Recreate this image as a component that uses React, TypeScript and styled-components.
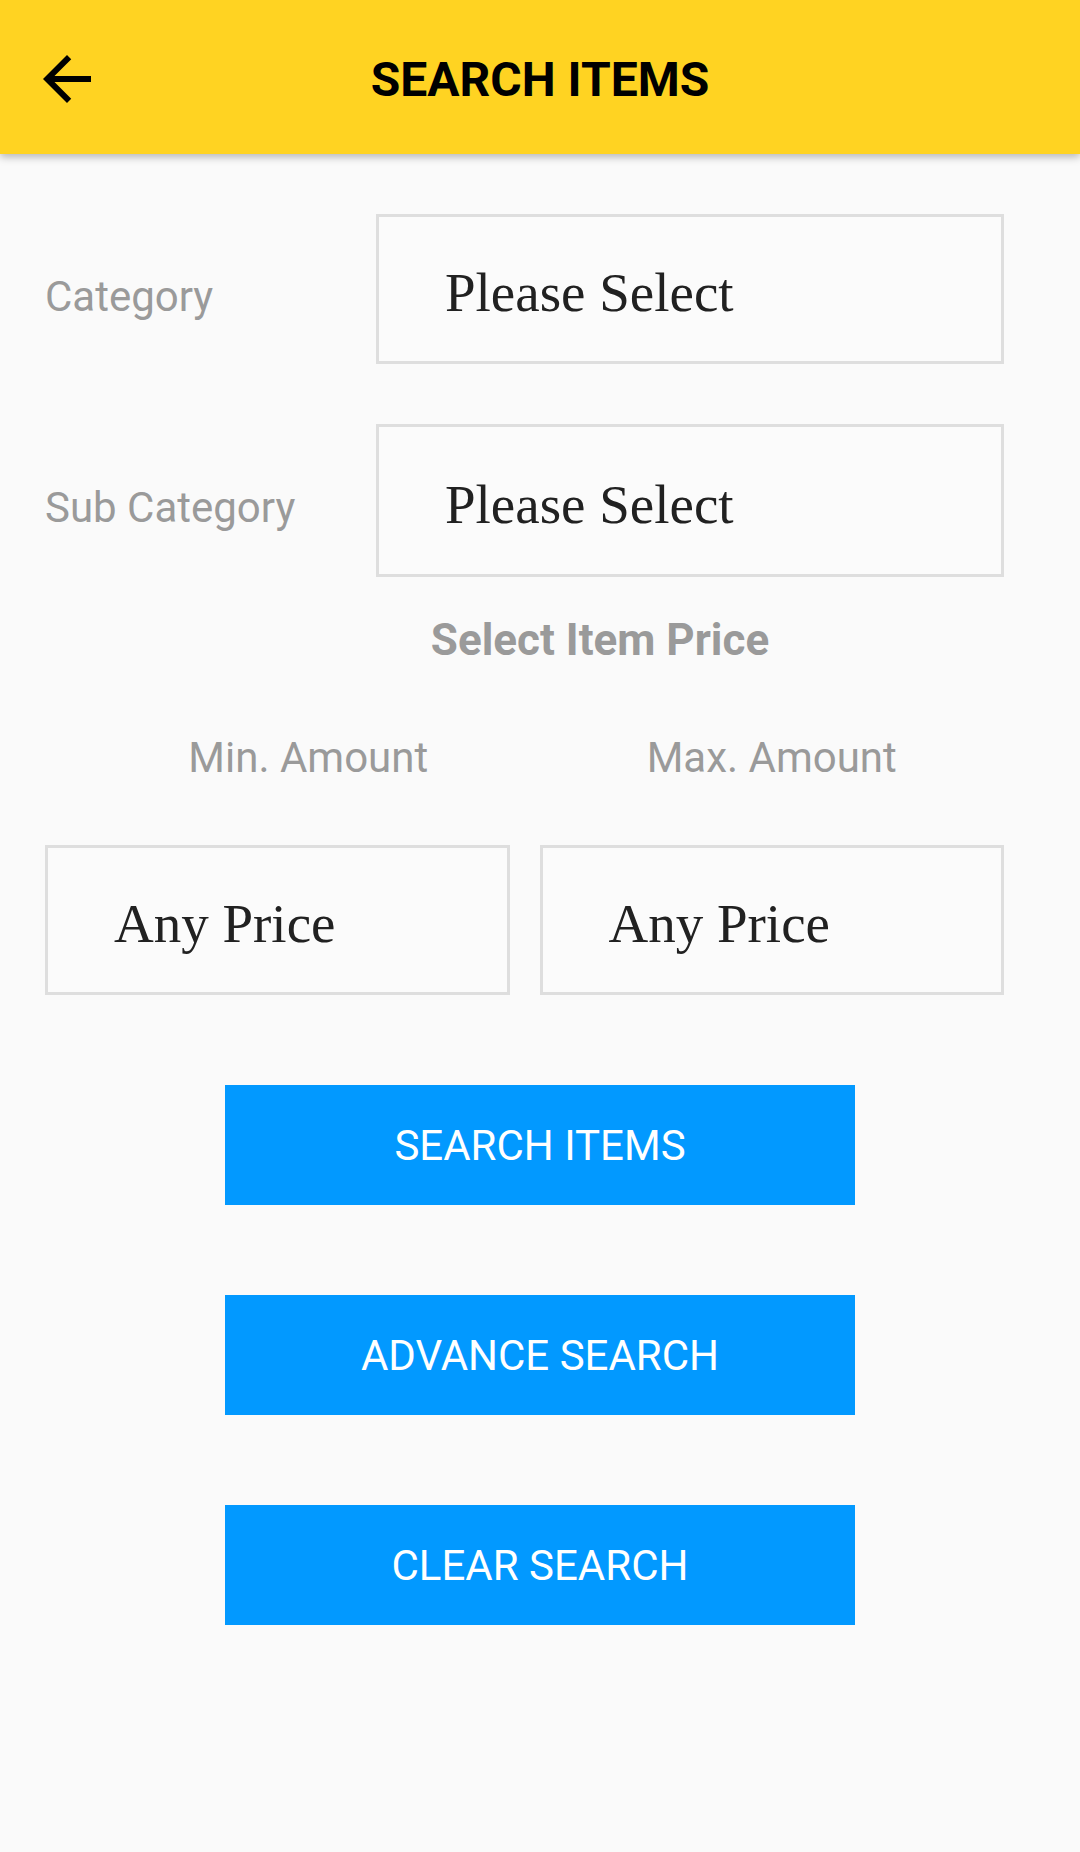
import React from 'react'
import styled, { createGlobalStyle } from 'styled-components'

const GlobalStyle = createGlobalStyle`
    html, body {
        margin: 0;
        padding: 0;
        background: #fafafa;
    }
    * {
        box-sizing: border-box;
    }
`

const priceOptions = ['Any Price', '100', '500', '1000']

const App: React.FC = () => {
    const [category, setCategory] = React.useState<string>('Please Select')
    const [subCategory, setSubCategory] = React.useState<string>('Please Select')
    const [minPrice, setMinPrice] = React.useState<string>(priceOptions[0])
    const [maxPrice, setMaxPrice] = React.useState<string>(priceOptions[0])

    const clearSearch = () => {
        setCategory('Please Select')
        setSubCategory('Please Select')
        setMinPrice(priceOptions[0])
        setMaxPrice(priceOptions[0])
    }

    return (
        <React.Fragment>
            <GlobalStyle />
            <Page>
                <Header>
                    <BackButton aria-label="back">
                        <svg width="72" height="72" viewBox="0 0 24 24">
                            <path
                                fill="#000"
                                d="M20 11H7.83l5.59-5.59L12 4l-8 8 8 8 1.41-1.41L7.83 13H20v-2z"
                            />
                        </svg>
                    </BackButton>
                    <Title>SEARCH ITEMS</Title>
                    <span />
                </Header>

                <Content>
                    <FieldRow>
                        <Label>Category</Label>
                        <SelectBox onClick={() => setCategory(category)}>{category}</SelectBox>
                    </FieldRow>
                    <FieldRow>
                        <Label>Sub Category</Label>
                        <SelectBox tall onClick={() => setSubCategory(subCategory)}>{subCategory}</SelectBox>
                    </FieldRow>

                    <SectionTitle>Select Item Price</SectionTitle>

                    <PriceLabels>
                        <PriceLabel shift={62}>Min. Amount</PriceLabel>
                        <PriceLabel shift={0}>Max. Amount</PriceLabel>
                    </PriceLabels>

                    <PriceRow>
                        <SelectBox onClick={() => setMinPrice(minPrice)}>{minPrice}</SelectBox>
                        <SelectBox onClick={() => setMaxPrice(maxPrice)}>{maxPrice}</SelectBox>
                    </PriceRow>

                    <Buttons>
                        <ActionButton>SEARCH ITEMS</ActionButton>
                        <ActionButton>ADVANCE SEARCH</ActionButton>
                        <ActionButton onClick={clearSearch}>CLEAR SEARCH</ActionButton>
                    </Buttons>
                </Content>
            </Page>
        </React.Fragment>
    )
}

export default App

const Page = styled.div`
    min-height: 1852px;
    background: #fafafa;
    font-family: Roboto, 'Liberation Sans', sans-serif;
`

const Header = styled.div`
    height: 154px;
    padding-top: 4px;
    background: #ffd322;
    display: grid;
    grid-template-columns: 1fr auto 1fr;
    align-items: center;
    box-shadow: 0 3px 8px rgba(0, 0, 0, 0.28);
`

const BackButton = styled.div`
    display: flex;
    align-items: center;
    margin-left: 31px;
    width: 72px;
    height: 72px;
`

const Title = styled.div`
    font-size: 48px;
    font-weight: 700;
    color: #000;
`

const Content = styled.div`
    padding: 60px 76px 0 45px;
`

const FieldRow = styled.div`
    display: grid;
    grid-template-columns: 331px 1fr;
    align-items: center;
    margin-bottom: 60px;

    &:nth-of-type(2) {
        margin-bottom: 0;
    }
`

const Label = styled.div`
    font-size: 42px;
    color: #9a9a9a;
    padding-top: 14px;
`

const SelectBox = styled.div<{ tall?: boolean }>`
    height: ${(p) => (p.tall ? 153 : 150)}px;
    border: 3px solid #dedede;
    background: #fbfbfb;
    display: flex;
    align-items: center;
    padding: 7px 0 0 66px;
    font-family: 'Liberation Serif', serif;
    font-size: 55px;
    color: #212121;
    cursor: pointer;
`

const SectionTitle = styled.div`
    margin-top: 37px;
    padding-left: 151px;
    text-align: center;
    font-size: 44px;
    line-height: 52px;
    font-weight: 700;
    color: #9a9a9a;
`

const PriceLabels = styled.div`
    display: grid;
    grid-template-columns: 1fr 1fr;
    column-gap: 30px;
    margin-top: 68px;
`

const PriceLabel = styled.div<{ shift: number }>`
    text-align: center;
    padding-left: ${(p) => p.shift}px;
    font-size: 42px;
    line-height: 48px;
    color: #9a9a9a;
`

const PriceRow = styled.div`
    display: grid;
    grid-template-columns: 1fr 1fr;
    column-gap: 30px;
    margin-top: 63px;
`

const Buttons = styled.div`
    display: flex;
    flex-direction: column;
    align-items: center;
    gap: 90px;
    margin-top: 90px;
    padding-left: 31px;
`

const ActionButton = styled.button`
    width: 630px;
    height: 120px;
    border: none;
    background: #0299ff;
    color: #fff;
    font-family: Roboto, 'Liberation Sans', sans-serif;
    font-size: 42px;
    cursor: pointer;
`
